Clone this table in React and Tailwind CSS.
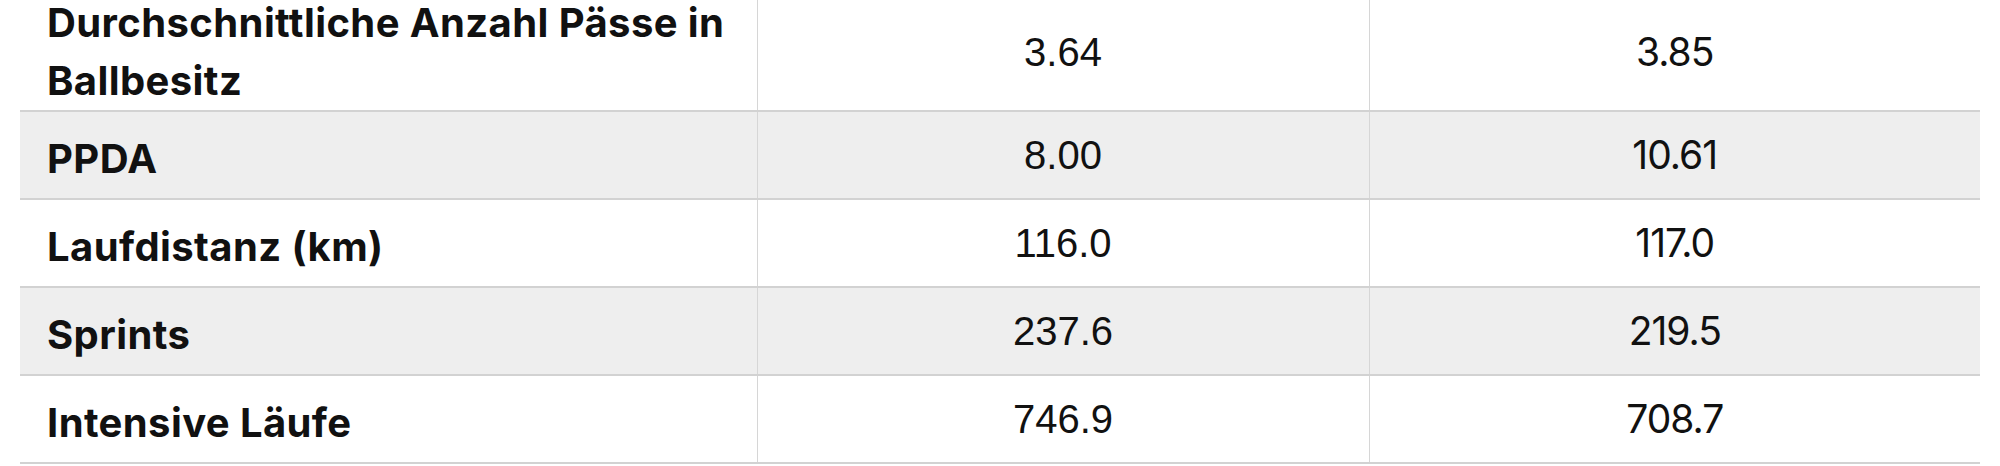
const rows = [
  { label: "Durchschnittliche Anzahl Pässe in Ballbesitz", home: "3.64", away: "3.85" },
  { label: "PPDA", home: "8.00", away: "10.61" },
  { label: "Laufdistanz (km)", home: "116.0", away: "117.0" },
  { label: "Sprints", home: "237.6", away: "219.5" },
  { label: "Intensive Läufe", home: "746.9", away: "708.7" },
];

const App = () => {
  return (
    <div className="w-[2000px] h-[466px] overflow-hidden bg-white">
      <table className="ml-[20px] -mt-[6px] w-[1960px] border-collapse table-fixed text-[#111]">
        <colgroup>
          <col className="w-[737px]" />
          <col className="w-[612px]" />
          <col className="w-[611px]" />
        </colgroup>
        <tbody>
          {rows.map((row, i) => (
            <tr key={row.label} className={`border-b-2 border-[#d2d2d2] ${i % 2 === 1 ? "bg-[#eeeeee]" : "bg-white"}`}>
              {/* Stat name */}
              <td
                className={`pl-[27px] pr-[8px] border-r border-[#d6d6d6] font-['Inter',sans-serif] font-bold text-[40px] leading-[58px] tracking-[0.4px] align-middle ${
                  i === 0 ? "py-0" : "pt-[18px] pb-[10px]"
                }`}
              >
                {row.label}
              </td>
              <td className="py-[14px] border-r border-[#d6d6d6] text-center font-['Liberation_Sans',Arial,sans-serif] text-[40px] leading-[58px] align-middle">
                {row.home}
              </td>
              <td className="py-[14px] text-center font-['Inter',sans-serif] text-[39px] leading-[58px] tracking-[-1px] align-middle">
                {row.away}
              </td>
            </tr>
          ))}
        </tbody>
      </table>
    </div>
  );
};

export default App;
